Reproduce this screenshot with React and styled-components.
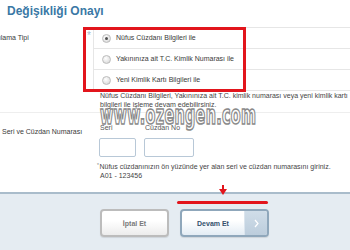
import React from 'react';
import styled, { createGlobalStyle } from 'styled-components';

const Global = createGlobalStyle`
  html, body { margin: 0; padding: 0; background: #fff; }
  body {
    width: 350px; height: 250px; overflow: hidden;
    font-family: "Liberation Sans", Arial, sans-serif;
  }
`;

const Page = styled.div`
  position: relative;
  width: 350px;
  height: 250px;
  display: flex;
  flex-direction: column;
  overflow: hidden;
  color: #3c3c3c;
  font-size: 7px;
  line-height: 8.5px;
`;

const Title = styled.h1`
  margin: 0;
  height: 27px;
  box-sizing: border-box;
  padding: 4px 0 0 7px;
  font-size: 12px;
  line-height: 14px;
  font-weight: bold;
  color: #3a78a5;
  white-space: nowrap;
`;

const Section = styled.div`
  display: grid;
  grid-template-columns: 93px 1fr;
  border-bottom: ${p => (p.$divided ? '1px solid #eeeeee' : 'none')};
`;

const LabelCell = styled.div`
  display: flex;
  justify-content: space-between;
  align-items: flex-start;
  padding: ${p => p.$top}px 0 0 2px;
  white-space: nowrap;
`;

const LabelText = styled.span`
  margin-left: ${p => p.$shift || 0}px;
  color: #3a3a3a;
`;

const Star = styled.span`
  font-size: 10px;
  line-height: 10px;
  margin: -3px 2px 0 0;
  color: #a8bccf;
`;

const Options = styled.div`
  border-top: 1px solid #e6e6e6;
  border-left: 1px solid #e6e6e6;
`;

const Option = styled.label`
  height: 20px;
  display: flex;
  align-items: center;
  gap: 5px;
  padding-left: 8px;
  border-bottom: 1px solid #e6e6e6;
  color: #3a3a3a;
  white-space: nowrap;
`;

const Radio = styled.span`
  width: 9px;
  height: 9px;
  box-sizing: border-box;
  border-radius: 50%;
  border: 1px solid #bcbcbc;
  background: radial-gradient(circle at 40% 35%, #ffffff 0%, #e4e4e4 60%, #cfcfcf 100%);
  display: flex;
  align-items: center;
  justify-content: center;
  &::after {
    content: '';
    width: 3px;
    height: 3px;
    border-radius: 50%;
    background: ${p => (p.$checked ? '#505050' : 'transparent')};
  }
`;

const Description = styled.div`
  grid-column: 2;
  padding: 1px 0 2.5px 7px;
  color: #454545;
  white-space: nowrap;
`;

const FieldArea = styled.div`
  padding: 11px 0 0 6px;
`;

const Fields = styled.div`
  display: flex;
  gap: 8px;
`;

const Field = styled.div`
  display: flex;
  flex-direction: column;
`;

const SubLabel = styled.span`
  padding-left: 1px;
  margin-bottom: 5.5px;
  color: #555;
`;

const Input = styled.input`
  width: ${p => p.$w}px;
  height: 19px;
  box-sizing: border-box;
  margin: 0;
  border: 1px solid #b8c8d7;
  border-radius: 2px;
  background: #fff;
`;

const Note = styled.div`
  margin-top: 4.75px;
  padding-left: 1px;
  text-indent: -3px;
  color: #454545;
  white-space: nowrap;
`;

const Mark = styled.span`
  font-size: 5px;
  vertical-align: 2px;
  color: #888;
  margin-right: 0.5px;
`;

const Footer = styled.div`
  margin-top: auto;
  height: 58px;
  box-sizing: border-box;
  border-top: 2px solid #a9bccb;
  background: #e5ecf2;
  padding: 15px 0 0 100px;
  display: flex;
  gap: 11px;
  align-items: flex-start;
`;

const Button = styled.button`
  width: ${p => p.$w}px;
  height: 28px;
  box-sizing: border-box;
  padding: 0;
  border-radius: 4px;
  border: 2px solid ${p => (p.$primary ? '#8fa7bb' : '#bcbcbc')};
  background: linear-gradient(#ffffff 0%, #ffffff 40%, ${p => (p.$primary ? '#e3ecf4' : '#ececec')} 100%);
  font: bold 7px "Liberation Sans", Arial, sans-serif;
  color: ${p => (p.$primary ? '#34506c' : '#7a7a7a')};
  display: flex;
  align-items: stretch;
  overflow: hidden;
  box-shadow: 0 1px 1px rgba(0, 0, 0, 0.1);
`;

const ButtonText = styled.span`
  flex: 1;
  display: flex;
  align-items: center;
  justify-content: center;
`;

const ButtonArrow = styled.span`
  width: 22px;
  background: linear-gradient(#d0dde8, #bccddc);
  border-left: 1px solid #dbe5ee;
  display: flex;
  align-items: center;
  justify-content: center;
`;

const RedBox = styled.div`
  position: absolute;
  left: 83px;
  top: 27px;
  width: 163px;
  height: 65px;
  box-sizing: border-box;
  border: 3px solid #e2151c;
  pointer-events: none;
`;

const RedLine = styled.div`
  position: absolute;
  left: 177px;
  top: 201px;
  width: 91px;
  height: 3px;
  border-radius: 1.5px;
  background: #e2151c;
`;

const ArrowMark = styled.svg`
  position: absolute;
  left: 219px;
  top: 185px;
`;

const Watermark = styled.div`
  position: absolute;
  left: 100px;
  top: 102px;
  font-family: "DejaVu Sans Condensed", "DejaVu Sans", sans-serif;
  font-weight: bold;
  font-size: 16px;
  line-height: 16px;
  letter-spacing: 0.3px;
  color: #ffffff;
  -webkit-text-stroke: 1px #8a8a8a;
  transform: scale(1, 1.7);
  transform-origin: 0 0;
  white-space: nowrap;
  pointer-events: none;
`;

export default function App() {
  return (
    <>
      <Global />
      <Page>
        <Title>Değişikliği Onayı</Title>

        <Section $divided>
          <LabelCell $top={6.5}>
            <LabelText $shift={-20}>Sorgulama Tipi</LabelText>
            <Star>*</Star>
          </LabelCell>
          <Options>
            <Option><Radio $checked />Nüfus Cüzdanı Bilgileri ile</Option>
            <Option><Radio />Yakınınıza ait T.C. Kimlik Numarası ile</Option>
            <Option><Radio />Yeni Kimlik Kartı Bilgileri ile</Option>
          </Options>
          <Description>
            Nüfus Cüzdanı Bilgileri, Yakınınıza ait T.C. kimlik numarası veya yeni kimlik kartı
            <br />
            bilgileri ile işleme devam edebilirsiniz.
          </Description>
        </Section>

        <Section>
          <LabelCell $top={15.75}>
            <LabelText>Seri ve Cüzdan Numarası</LabelText>
          </LabelCell>
          <FieldArea>
            <Fields>
              <Field>
                <SubLabel>Seri</SubLabel>
                <Input $w={37} />
              </Field>
              <Field>
                <SubLabel>Cüzdan No</SubLabel>
                <Input $w={50} />
              </Field>
            </Fields>
            <Note>
              <Mark>*</Mark>Nüfus cüzdanınızın ön yüzünde yer alan seri ve cüzdan numarasını giriniz.
              <br />
              A01 - 123456
            </Note>
          </FieldArea>
        </Section>

        <Footer>
          <Button $w={69}>
            <ButtonText>İptal Et</ButtonText>
          </Button>
          <Button $w={89} $primary>
            <ButtonText>Devam Et</ButtonText>
            <ButtonArrow>
              <svg width="5" height="9" viewBox="0 0 5 9">
                <path d="M1 1 L4 4.5 L1 8" fill="none" stroke="#ffffff" strokeWidth="1.2" />
              </svg>
            </ButtonArrow>
          </Button>
        </Footer>

        <Watermark>www.ozengen.com</Watermark>
        <RedBox />
        <ArrowMark width="8" height="10" viewBox="0 0 8 10">
          <rect x="3" y="0" width="2" height="5" fill="#e2151c" />
          <path d="M0 4 L8 4 L4 10 Z" fill="#e2151c" />
        </ArrowMark>
        <RedLine />
      </Page>
    </>
  );
}
